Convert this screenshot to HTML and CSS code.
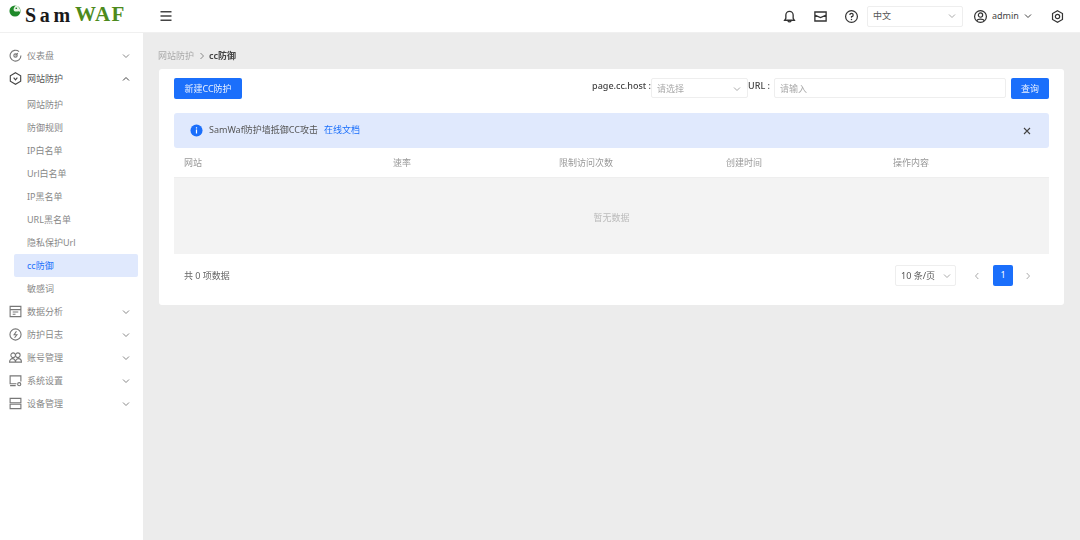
FILE: index.html
```html
<!DOCTYPE html>
<html lang="zh-CN">
<head>
<meta charset="utf-8">
<title>SamWAF</title>
<link rel="stylesheet" href="styles.css">
</head>
<body>
<header class="topbar">
  <div class="logo">
    <svg class="logo-mark" viewBox="0 0 14 14"><circle cx="7" cy="7" r="6.500" fill="#1f8a2a"/><path d="M8 .7a6.400 6.400 0 0 1 5 7.500C11 6 8.500 9 6 7 4.500 5.500 6 2 8 .7z" fill="#e8f3e4"/><circle cx="8.500" cy="3.800" r="1" fill="#1f8a2a"/></svg>
    <span class="logo-sam">Sam</span><span class="logo-waf">WAF</span>
  </div>
  <button class="menu-toggle" aria-label="menu"><svg viewBox="0 0 14 14" width="14" height="14"><path d="M1.500 2.800h11M1.500 7h11M1.500 11.200h11" stroke="#444" stroke-width="1.400" fill="none"/></svg></button>
  <div class="top-actions">
    <svg class="ticon" viewBox="0 0 16 16"><path d="M2.800 12h10.400l-1.300-2V6.500a3.900 3.900 0 0 0-7.800 0V10zM6.300 12.500a1.800 1.800 0 0 0 3.400 0" fill="none" stroke="#333" stroke-width="1.400"/></svg>
    <svg class="ticon" viewBox="0 0 16 16"><path d="M2 3.200h12v9.600H2zM2 6.500l6 2.700 6-2.700" fill="none" stroke="#333" stroke-width="1.400"/></svg>
    <svg class="ticon" viewBox="0 0 16 16"><circle cx="8" cy="8" r="6.300" fill="none" stroke="#333" stroke-width="1.300"/><path d="M6.200 6.400A1.800 1.800 0 1 1 8 8.200v1.200" fill="none" stroke="#333" stroke-width="1.300"/><circle cx="8" cy="11.200" r=".8" fill="#333"/></svg>
    <div class="lang-select"><span>中文</span><svg class="chev chev-light" viewBox="0 0 10 10"><path d="M2 3.500l3 3 3-3"/></svg></div>
    <div class="user">
      <svg class="ticon" viewBox="0 0 16 16"><circle cx="8" cy="8" r="6.300" fill="none" stroke="#333" stroke-width="1.300"/><circle cx="8" cy="6.500" r="2.300" fill="none" stroke="#333" stroke-width="1.300"/><path d="M4 12.400c1-2.200 7-2.200 8 0" fill="none" stroke="#333" stroke-width="1.300"/></svg>
      <span>admin</span>
      <svg class="chev chev-dark" viewBox="0 0 10 10"><path d="M2 3.500l3 3 3-3"/></svg>
    </div>
    <svg class="ticon" viewBox="0 0 16 16"><path d="M8 1.800l5.300 3.100v6.200L8 14.200l-5.300-3.100V4.900z" fill="none" stroke="#333" stroke-width="1.300"/><circle cx="8" cy="8" r="2.300" fill="none" stroke="#333" stroke-width="1.300"/></svg>
  </div>
</header>
<div class="shell">
  <aside class="sidebar">
    <div class="nav-item"><svg class="nicon" viewBox="0 0 14 14"><path d="M10.800 2.800A5.800 5.800 0 1 0 12.800 7"/><path d="M7 7l2.500-2.500"/><circle cx="7" cy="7" r="1.800"/></svg><span>仪表盘</span><svg class="chev" viewBox="0 0 10 10"><path d="M2 3.500l3 3 3-3"/></svg></div>
    <div class="nav-item nav-open"><svg class="nicon nicon-dark" viewBox="0 0 14 14"><path d="M7 .8l5.600 3.200v6L7 13.200 1.400 10V4z"/><path d="M5 6l2 2.500L9 6"/></svg><span>网站防护</span><svg class="chev chev-dark" viewBox="0 0 10 10"><path d="M2 6.500l3-3 3 3"/></svg></div>
    <div class="submenu">
      <a class="sub-item">网站防护</a>
      <a class="sub-item">防御规则</a>
      <a class="sub-item">IP白名单</a>
      <a class="sub-item">Url白名单</a>
      <a class="sub-item">IP黑名单</a>
      <a class="sub-item">URL黑名单</a>
      <a class="sub-item">隐私保护Url</a>
      <a class="sub-item sub-active">cc防御</a>
      <a class="sub-item">敏感词</a>
    </div>
    <div class="nav-item"><svg class="nicon" viewBox="0 0 14 14"><path d="M1.200 1.500h11.600v11H1.200zM1.200 5h11.600M4 7.500h6M4 10h3"/></svg><span>数据分析</span><svg class="chev" viewBox="0 0 10 10"><path d="M2 3.500l3 3 3-3"/></svg></div>
    <div class="nav-item"><svg class="nicon" viewBox="0 0 14 14"><circle cx="7" cy="7" r="6"/><path d="M8 3.500L5.500 7.300h3L6 10.500"/></svg><span>防护日志</span><svg class="chev" viewBox="0 0 10 10"><path d="M2 3.500l3 3 3-3"/></svg></div>
    <div class="nav-item"><svg class="nicon" viewBox="0 0 14 14"><circle cx="4.500" cy="4.500" r="2.500"/><circle cx="9.500" cy="4.500" r="2.500"/><path d="M.6 12c0-5 6.400-5 6.400 0zM7 12c0-5 6.400-5 6.400 0z"/></svg><span>账号管理</span><svg class="chev" viewBox="0 0 10 10"><path d="M2 3.500l3 3 3-3"/></svg></div>
    <div class="nav-item"><svg class="nicon" viewBox="0 0 14 14"><path d="M8 10.500H1.200v-8.500h11.600V8M1.200 12.500h6"/><circle cx="11" cy="11" r="1.700"/></svg><span>系统设置</span><svg class="chev" viewBox="0 0 10 10"><path d="M2 3.500l3 3 3-3"/></svg></div>
    <div class="nav-item"><svg class="nicon" viewBox="0 0 14 14"><path d="M1.200 1.500h11.600v4.700H1.200zM1.200 7.800h11.600v4.700H1.200z"/></svg><span>设备管理</span><svg class="chev" viewBox="0 0 10 10"><path d="M2 3.500l3 3 3-3"/></svg></div>
  </aside>
  <main class="content">
    <nav class="crumbs"><span class="crumb-muted">网站防护</span><svg class="crumb-sep" viewBox="0 0 8 8"><path d="M2.500 1l3 3-3 3"/></svg><span class="crumb-now">cc防御</span></nav>
    <section class="card">
      <div class="toolbar">
        <button class="btn">新建CC防护</button>
        <div class="filters">
          <label class="flabel">page.cc.host :</label>
          <div class="field field-select"><span>请选择</span><svg class="chev chev-light" viewBox="0 0 10 10"><path d="M2 3.500l3 3 3-3"/></svg></div>
          <label class="flabel">URL :</label>
          <div class="field field-input"><span>请输入</span></div>
          <button class="btn btn-query">查询</button>
        </div>
      </div>
      <div class="alert">
        <svg class="alert-icon" viewBox="0 0 14 14"><circle cx="7" cy="7" r="6.500" fill="#1b6ffb"/><path d="M7 6v4.200M7 3.600v1.200" stroke="#fff" stroke-width="1.300"/></svg>
        <span class="alert-text">SamWaf防护墙抵御CC攻击</span>
        <a class="alert-link">在线文档</a>
        <svg class="alert-close" viewBox="0 0 10 10"><path d="M2 2l6 6M8 2l-6 6"/></svg>
      </div>
      <div class="thead">
        <span>网站</span><span>速率</span><span>限制访问次数</span><span>创建时间</span><span>操作内容</span>
      </div>
      <div class="empty">暂无数据</div>
      <div class="pager">
        <span class="total">共 0 项数据</span>
        <div class="pager-right">
          <div class="size-select"><span>10 条/页</span><svg class="chev chev-light" viewBox="0 0 10 10"><path d="M2 3.500l3 3 3-3"/></svg></div>
          <svg class="page-arrow" viewBox="0 0 10 10"><path d="M6.300 2L3.500 5l2.800 3"/></svg>
          <span class="page-current">1</span>
          <svg class="page-arrow" viewBox="0 0 10 10"><path d="M3.700 2l2.800 3-2.800 3"/></svg>
        </div>
      </div>
    </section>
  </main>
</div>
</body>
</html>
```
FILE: styles.css
```css
* { box-sizing: border-box; }
html, body { margin: 0; height: 100%; }
body {
  width: 1080px; height: 540px; overflow: hidden; background: #ececec; color: #555;
  font: 9px/1.2 "Noto Sans", "Noto Sans CJK SC", sans-serif;
  filter: blur(.6px);
}
svg { display: block; flex: none; }
button { font: inherit; border: 0; padding: 0; background: none; }

.topbar { height: 33px; background: #fff; display: flex; align-items: center; border-bottom: 1px solid #f0f0f0; }
.logo { width: 159px; height: 32px; padding: 0 0 3px 9px; display: flex; align-items: center; font: bold 20px/1 "Liberation Serif", serif; letter-spacing: 3.700px; }
.logo-mark { width: 12px; height: 12px; align-self: flex-start; margin-top: 5px; margin-right: 4px; }
.logo-sam { color: #1a1a1a; margin-right: 1px; }
.logo-waf { color: #4d8a1c; letter-spacing: 1.400px; font-size: 21px; }
.menu-toggle { width: 14px; height: 14px; }
.top-actions { margin-left: auto; display: flex; align-items: center; height: 32px; padding-right: 15px; }
.ticon { width: 15px; height: 15px; margin-left: 16px; }
.lang-select { width: 96px; height: 21px; margin-left: 8px; border: 1px solid #eee; border-radius: 2px; display: flex; align-items: center; justify-content: space-between; padding: 0 5px; color: #555; }
.user { display: flex; align-items: center; gap: 4px; color: #444; width: 77px; }
.user .ticon { margin-left: 10px; }
.user + .ticon { margin-left: 10px; }

.chev { width: 10px; height: 10px; fill: none; stroke: #888; stroke-width: 1; }
.chev-light { stroke: #aaa; }
.chev-dark { stroke: #444; }

.shell { display: flex; height: 507px; }
.sidebar { width: 143px; background: #fff; padding-top: 11px; color: #888; }
.nav-item { height: 23px; display: flex; align-items: center; padding: 0 12px 0 9px; }
.nav-item span { margin-left: 5px; padding-top: 2px; }
.nav-item .chev { margin-left: auto; }
.nav-open { color: #555; }
.nicon { width: 13px; height: 13px; fill: none; stroke: #777; stroke-width: 1.200; }
.nicon-dark { stroke: #444; }
.submenu { padding-top: 3px; display: flex; flex-direction: column; }
.sub-item { height: 23px; display: flex; align-items: center; padding: 2px 0 0 27px; color: #888; }
.sub-active { background: #e0e9fd; color: #1b6ffb; margin-left: 14px; margin-right: 5px; padding-left: 13px; border-radius: 2px; }

.content { flex: 1; padding: 0 16px; }
.crumbs { height: 36px; padding-top: 10px; margin-left: -1px; display: flex; align-items: center; gap: 3.500px; }
.crumb-muted { color: #aaa; }
.crumb-sep { width: 8px; height: 8px; fill: none; stroke: #888; stroke-width: 1; }
.crumb-now { color: #444; font-weight: 600; }

.card { width: 905px; height: 236px; background: #fff; border-radius: 3px; padding: 9px 15px 0; }
.toolbar { display: flex; justify-content: space-between; align-items: flex-start; height: 21px; }
.btn { background: #1b6ffb; color: #e8f0ff; border-radius: 2px; height: 21px; width: 68px; text-align: center; padding-top: 1px; }
.btn-query { width: 38px; margin-left: 5px; }
.filters { display: flex; align-items: flex-start; }
.flabel { color: #444; font-weight: 500; line-height: 16px; }
.field { height: 20px; border: 1px solid #eee; border-radius: 2px; display: flex; align-items: center; justify-content: space-between; padding: 2px 5px 0; color: #aaa; }
.field-select { width: 97px; }
.field-input { width: 232px; margin-left: 4px; }

.alert { height: 35px; margin-top: 14px; background: #e0e9fd; border-radius: 3px; display: flex; align-items: center; padding: 0 17px 0 16px; color: #555; }
.alert-icon { width: 13px; height: 13px; margin-right: 6px; }
.alert-link { color: #1b6ffb; margin-left: 6px; }
.alert-close { width: 10px; height: 10px; margin-left: auto; fill: none; stroke: #444; stroke-width: 1.100; }

.thead { height: 30px; padding-top: 2px; display: grid; grid-template-columns: 209px 166px 167px 167px 166px; align-items: center; color: #999; border-bottom: 1px solid #eee; }
.thead span { padding-left: 10px; }
.empty { height: 76px; padding-top: 5px; background: #f3f3f3; display: flex; align-items: center; justify-content: center; color: #bbb; }

.pager { height: 43px; display: flex; align-items: center; justify-content: space-between; padding-left: 10px; color: #666; }
.total { padding-top: 2px; }
.pager-right { display: flex; align-items: center; padding-right: 16px; }
.size-select { width: 61px; height: 21px; border: 1px solid #eee; border-radius: 2px; display: flex; align-items: center; justify-content: space-between; padding: 0 3px 0 5px; color: #555; }
.size-select span { padding-top: 2px; }
.page-arrow { width: 10px; height: 10px; fill: none; stroke: #aaa; stroke-width: 1; }
.pager-right .page-arrow:nth-child(2) { margin-left: 16px; }
.page-current { width: 20px; height: 21px; margin: 0 10px 0 11px; background: #1b6ffb; color: #fff; border-radius: 2px; display: flex; align-items: center; justify-content: center; }
```
